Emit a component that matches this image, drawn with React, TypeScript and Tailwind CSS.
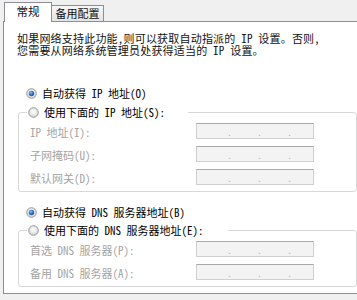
import type { ReactNode } from "react";

function Radio({ checked }: { checked?: boolean }) {
  return (
    <svg width="11" height="11" viewBox="0 0 11 11" className="shrink-0">
      <defs>
        <radialGradient id={checked ? "rOn" : "rOff"} cx="50%" cy="40%" r="60%">
          <stop offset="0%" stopColor="#ffffff" />
          <stop offset="100%" stopColor="#d6d6d6" />
        </radialGradient>
        <radialGradient id="dot" cx="40%" cy="35%" r="70%">
          <stop offset="0%" stopColor="#8cc0f2" />
          <stop offset="60%" stopColor="#2a6bc3" />
          <stop offset="100%" stopColor="#1c4f9a" />
        </radialGradient>
      </defs>
      <circle cx="5.5" cy="5.5" r="4.8" fill={checked ? "url(#rOn)" : "url(#rOff)"} stroke="#8f8f8f" strokeWidth="0.9" />
      {checked && <circle cx="5.5" cy="5.5" r="2.7" fill="url(#dot)" />}
    </svg>
  );
}

function RadioRow({ checked, children }: { checked?: boolean; children: ReactNode }) {
  return (
    <div className="flex h-[18px] items-center gap-[5px] text-[11px] text-black">
      <Radio checked={checked} />
      <span className="whitespace-nowrap">{children}</span>
    </div>
  );
}

function IpBox() {
  return (
    <div className="flex h-[16px] w-[118px] items-end border border-[#cfcfcf] border-t-[#a9a9a9] bg-[#f3f3f3] pb-[1px] pl-[30px] gap-[27px] text-[10px] leading-[10px] text-[#b4b4b4]">
      <span className="w-[3px]">.</span>
      <span className="w-[3px]">.</span>
      <span className="w-[3px]">.</span>
    </div>
  );
}

function Field({ label }: { label: string }) {
  return (
    <div className="flex h-[16px] items-center">
      <span className="w-[166px] whitespace-nowrap pt-[3px] text-[11px] text-[#a3a3a3]">{label}</span>
      <IpBox />
    </div>
  );
}

function Group({ legend, wide, children }: { legend: ReactNode; wide?: boolean; children: ReactNode }) {
  return (
    <fieldset className="ml-[13px] w-[339px] rounded-[3px] border border-[#d8d8d8] px-[11px] pb-[6px]">
      <legend className={`ml-[-3px] pl-[1px] ${wide ? "w-[201px]" : "w-[161px]"}`}>
        <RadioRow>{legend}</RadioRow>
      </legend>
      <div className="flex flex-col gap-[7px] pt-[2px]">{children}</div>
    </fieldset>
  );
}

export default function App() {
  return (
    <div className="h-[300px] w-[357px] overflow-hidden bg-[#f0f0f0] font-['Noto_Sans_CJK_SC',sans-serif] leading-none [font-feature-settings:'hwid']">
      {/* Tabs */}
      <div className="flex h-[21px] items-end pl-[4px]">
        <div className="relative z-10 -mb-px flex h-[20px] w-[48px] items-start justify-center border border-b-0 border-[#8c8e94] bg-white pt-[3px] text-[11.5px] text-[#111]">
          常规
        </div>
        <div className="flex h-[16px] w-[52px] items-start justify-center border border-b-0 border-l-0 border-[#8c8e94] bg-gradient-to-b from-[#f7f7f7] to-[#e4e4e4] pt-[2px] text-[11px] text-[#111]">
          备用配置
        </div>
      </div>

      {/* Page */}
      <div className="ml-[3px] h-[273px] w-[360px] border border-[#8c8e94] bg-white pt-[10px] pb-[4px] pl-[1px]">
        <p className="pl-[12px] text-[11px] leading-[12px] tracking-[0.2px] text-[#111]">
          如果网络支持此功能，则可以获取自动指派的 IP 设置。否则，
          <br />
          您需要从网络系统管理员处获得适当的 IP 设置。
        </p>

        <div className="mt-[28px] pl-[21px]">
          <RadioRow checked>自动获得 IP 地址(O)</RadioRow>
        </div>

        <div className="mt-px">
          <Group legend="使用下面的 IP 地址(S):">
            <Field label="IP 地址(I):" />
            <Field label="子网掩码(U):" />
            <Field label="默认网关(D):" />
          </Group>
        </div>

        <div className="mt-[11px] pl-[21px]">
          <RadioRow checked>自动获得 DNS 服务器地址(B)</RadioRow>
        </div>

        <Group legend="使用下面的 DNS 服务器地址(E):" wide>
          <Field label="首选 DNS 服务器(P):" />
          <Field label="备用 DNS 服务器(A):" />
        </Group>
      </div>
    </div>
  );
}
